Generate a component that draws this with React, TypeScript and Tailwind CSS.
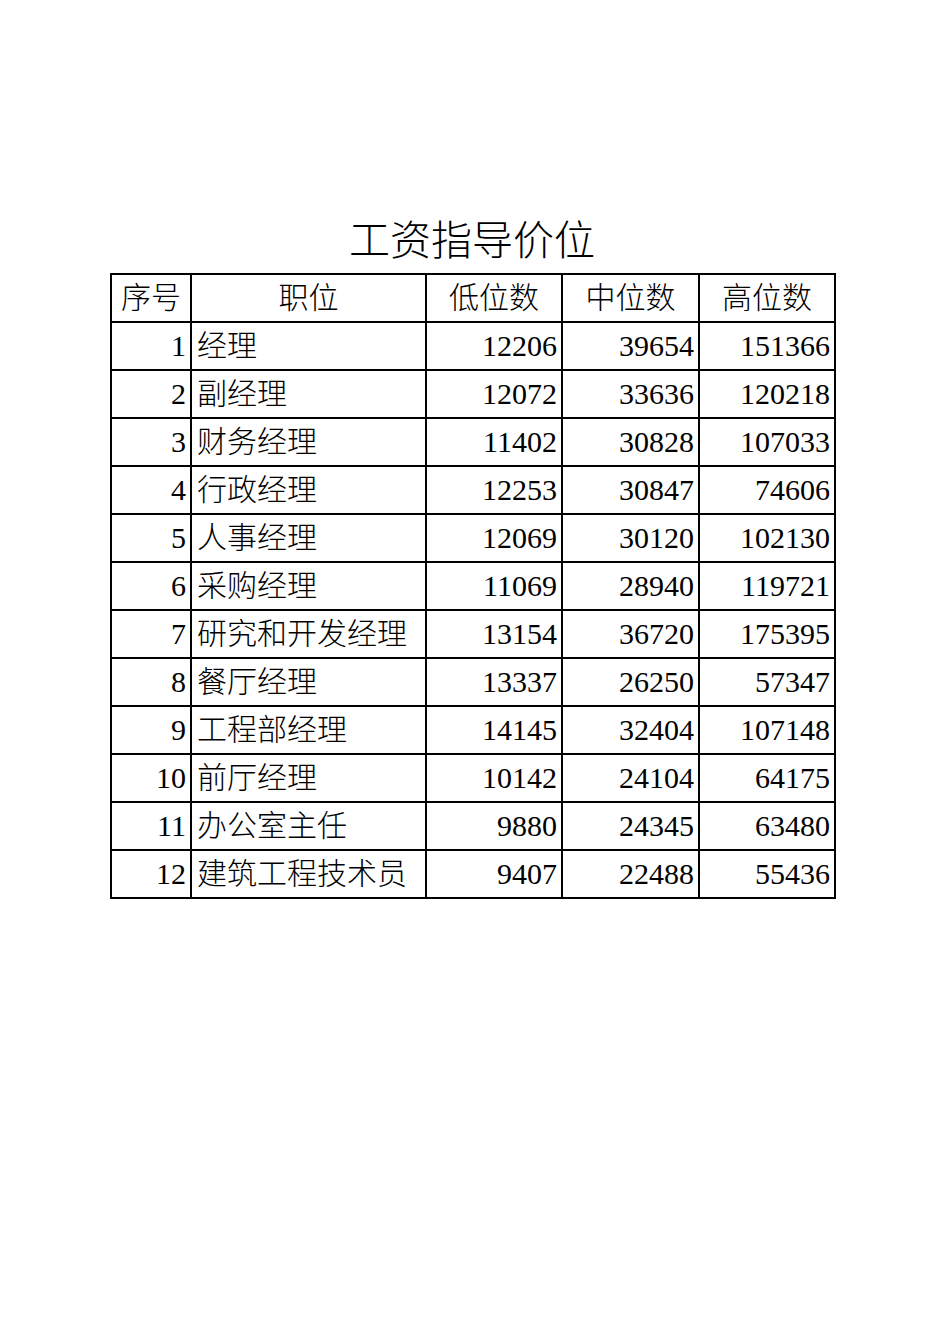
import type React from "react";

type Row = {
  no: number;
  title: string;
  low: number;
  mid: number;
  high: number;
};

const rows: Row[] = [
  { no: 1, title: "经理", low: 12206, mid: 39654, high: 151366 },
  { no: 2, title: "副经理", low: 12072, mid: 33636, high: 120218 },
  { no: 3, title: "财务经理", low: 11402, mid: 30828, high: 107033 },
  { no: 4, title: "行政经理", low: 12253, mid: 30847, high: 74606 },
  { no: 5, title: "人事经理", low: 12069, mid: 30120, high: 102130 },
  { no: 6, title: "采购经理", low: 11069, mid: 28940, high: 119721 },
  { no: 7, title: "研究和开发经理", low: 13154, mid: 36720, high: 175395 },
  { no: 8, title: "餐厅经理", low: 13337, mid: 26250, high: 57347 },
  { no: 9, title: "工程部经理", low: 14145, mid: 32404, high: 107148 },
  { no: 10, title: "前厅经理", low: 10142, mid: 24104, high: 64175 },
  { no: 11, title: "办公室主任", low: 9880, mid: 24345, high: 63480 },
  { no: 12, title: "建筑工程技术员", low: 9407, mid: 22488, high: 55436 },
];

const cell = "border-2 border-black h-[48px] p-0 leading-none";
// numbers stay at weight 400 so they keep Liberation Serif; CJK goes light
const num = `${cell} text-right pr-[4px] font-normal`;

const App: React.FC = () => {
  return (
    <div
      className="w-[950px] h-[1344px] bg-white text-black"
      style={{ fontFamily: '"Liberation Serif", "Noto Sans CJK SC", serif' }}
    >
      <div className="flex flex-col w-[724px] ml-[110px] pt-[216px]">
        <h1 className="text-[41px] leading-[50px] font-light text-center mb-[7px]">工资指导价位</h1>

        {/* Table */}
        <table className="border-collapse border-2 border-black text-[30px] table-fixed w-[724px]">
          <colgroup>
            <col className="w-[80px]" />
            <col className="w-[235px]" />
            <col className="w-[136px]" />
            <col className="w-[137px]" />
            <col className="w-[136px]" />
          </colgroup>
          <thead>
            <tr>
              {["序号", "职位", "低位数", "中位数", "高位数"].map((h) => (
                <th key={h} className={`${cell} font-light text-center`}>
                  {h}
                </th>
              ))}
            </tr>
          </thead>
          <tbody>
            {rows.map((r) => (
              <tr key={r.no}>
                <td className={num}>{r.no}</td>
                <td className={`${cell} font-light text-left pl-[5px] whitespace-nowrap`}>{r.title}</td>
                <td className={num}>{r.low}</td>
                <td className={num}>{r.mid}</td>
                <td className={num}>{r.high}</td>
              </tr>
            ))}
          </tbody>
        </table>
      </div>
    </div>
  );
};

export default App;
